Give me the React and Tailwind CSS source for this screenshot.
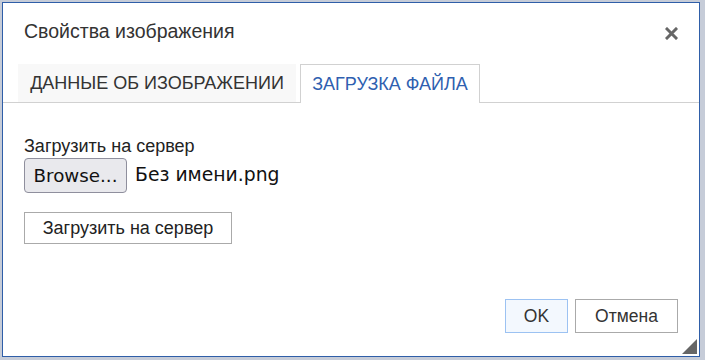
export default function App() {
  return (
    <div className="w-[705px] h-[360px] bg-[#c6ccd8] pt-[2px] pl-[2px] pr-[5px] pb-[3px] overflow-hidden" style={{ fontFamily: '"Liberation Sans", Arial, sans-serif' }}>
      <div className="relative w-[698px] h-[355px] bg-white border border-[#2f5ea8] flex flex-col">
        <div className="h-[61px] flex items-center justify-between pl-[21px] pr-[21px] pb-[4px]">
          <span className="text-[19.5px] text-[#333]">Свойства изображения</span>
          <svg width="13" height="13" viewBox="0 0 13 13" className="mt-[3px]">
            <path d="M2 2 L11 11 M11 2 L2 11" stroke="#666" strokeWidth="3" strokeLinecap="square" />
          </svg>
        </div>
        <div className="flex items-end pl-[15px] gap-[4px] border-b border-[#d1d1d1] h-[39px]">
          <div className="h-[38px] w-[278px] bg-[#f8f8f8] flex items-center justify-center text-[18px] text-[#333] pt-[1px]">ДАННЫЕ ОБ ИЗОБРАЖЕНИИ</div>
          <div className="h-[39px] w-[180px] bg-white border border-b-0 border-[#d1d1d1] mb-[-1px] flex items-center justify-center text-[18px] text-[#2f5fb0] pt-[1px]">ЗАГРУЗКА ФАЙЛА</div>
        </div>
        <div className="pl-[21px] pt-[33px] flex flex-col items-start">
          <div className="text-[18px] text-[#222] leading-[20px]">Загрузить на сервер</div>
          <div className="flex items-center mt-[2px]">
            <div className="h-[35px] w-[103px] bg-[#e9e9ed] border border-[#8f8f9d] rounded-[4px] flex items-center justify-center text-[#111]" style={{ fontFamily: '"DejaVu Sans", sans-serif', fontSize: '18.3px' }}>Browse...</div>
            <span className="ml-[8px] text-[#111]" style={{ fontFamily: '"DejaVu Sans", sans-serif', fontSize: '18.8px' }}>Без имени.png</span>
          </div>
          <div className="mt-[19px] h-[32px] w-[208px] border border-[#aaa] bg-white flex items-center justify-center text-[18px] text-[#222]">Загрузить на сервер</div>
        </div>
        <div className="flex-1" />
        <div className="flex justify-end gap-[7px] pr-[21px] pb-[23px]">
          <div className="h-[34px] w-[63px] border border-[#9cc2f2] bg-[#f3f8fe] flex items-center justify-center text-[17.5px] text-[#333]">OK</div>
          <div className="h-[34px] w-[103px] border border-[#aaa] bg-white flex items-center justify-center text-[17.5px] text-[#333]">Отмена</div>
        </div>
        <svg className="absolute right-[2px] bottom-[2px]" width="15" height="15" viewBox="0 0 15 15">
          <path d="M15 0 L15 15 L0 15 Z" fill="#666" />
        </svg>
      </div>
    </div>
  );
}
